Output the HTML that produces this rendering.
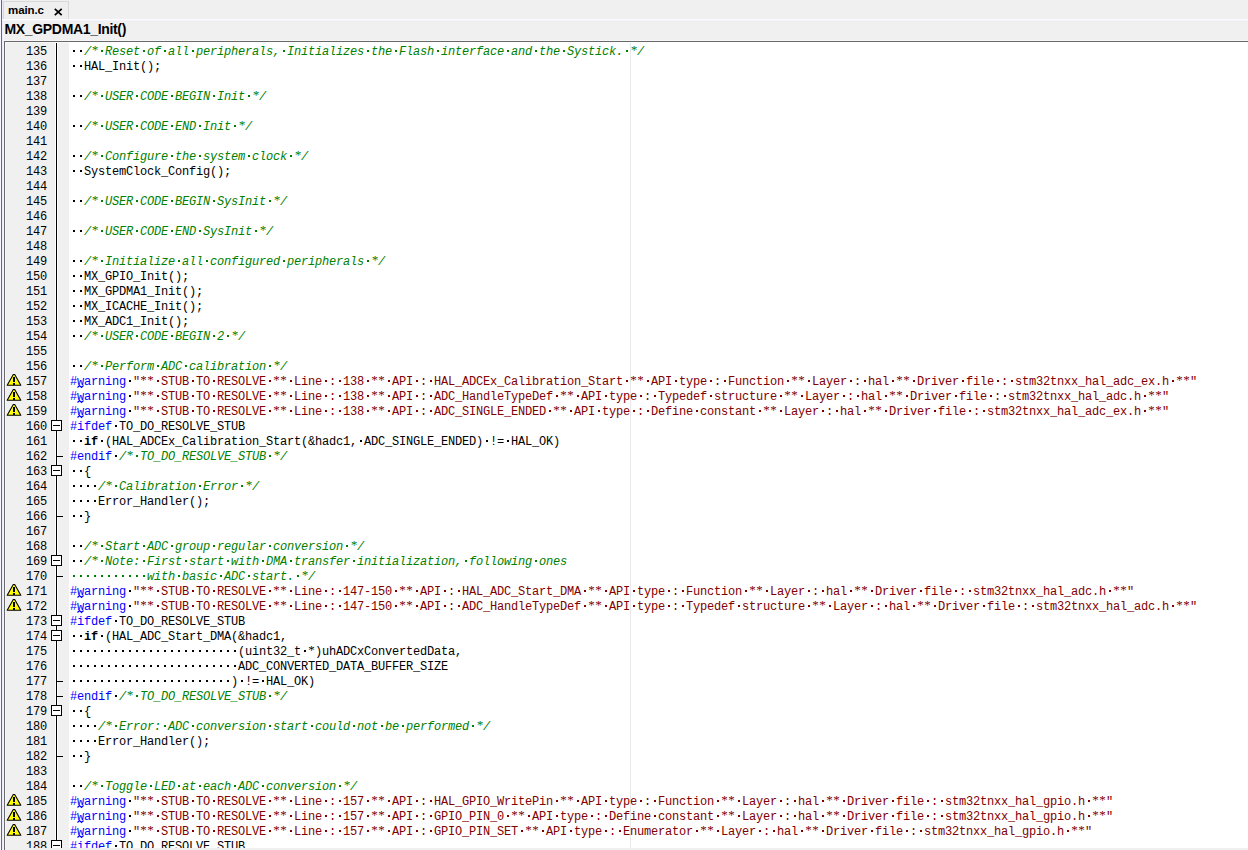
<!DOCTYPE html>
<html><head><meta charset="utf-8"><style>
*{margin:0;padding:0}
html,body{width:1248px;height:850px;overflow:hidden;background:#f0f0f0;position:relative}
.ab{position:absolute}
#lb1{position:absolute;left:0;top:0;width:1px;height:850px;background:#f7f7fe}
#lb2{position:absolute;left:1px;top:0;width:1px;height:850px;background:#6a6a6a}
#lb3{position:absolute;left:2px;top:0;width:1px;height:850px;background:#eaeafa}
#lb4{position:absolute;left:3px;top:0;width:1px;height:850px;background:#f4f4fe}
#tab{position:absolute;left:3px;top:1px;width:64px;height:18px;border:1px solid #d9d9d9;border-bottom:none;background:#efefef}
#tabt{position:absolute;left:4px;top:0px;letter-spacing:-0.1px;font:bold 11.5px "Liberation Sans",sans-serif;color:#000;line-height:17px}
#tabx{position:absolute;left:50px;top:5.5px}
.sq{position:absolute;left:76px}
#hl1{position:absolute;left:2px;top:19px;width:1246px;height:1px;background:#fcfcfc}
#hl2{position:absolute;left:2px;top:20px;width:1246px;height:1px;background:#f3f3fc}
#bc{position:absolute;left:4.5px;top:21px;font:bold 14px "Liberation Sans",sans-serif;letter-spacing:-0.33px;color:#000;line-height:17px;white-space:pre}
#hl3{position:absolute;left:4px;top:40px;width:1244px;height:1px;background:#f7f7f7}
#ed{position:absolute;left:4px;top:41px;width:1244px;height:809px;background:#fff;border-top:1px solid #696969;border-left:1px solid #696969;box-sizing:border-box}
#gut{position:absolute;left:5px;top:42px;width:64px;height:806px;background:#f0f0f0;border-top:1px solid #f8f8f8;border-left:1px solid #f8f8f8;box-sizing:border-box}
#gw1{position:absolute;left:55px;top:43px;width:3px;height:805px;background:#fff}
#gl{position:absolute;left:56px;top:43px;width:1px;height:805px;background:#000}
#pm{position:absolute;left:630px;top:43px;width:1px;height:805px;background:#e8e8e8}
.n{position:absolute;left:6px;width:41px;text-align:right;font:12px "Liberation Mono",monospace;letter-spacing:-0.203125px;line-height:15px;height:15px;color:#000;white-space:pre}
.w{position:absolute;left:6px}
.bx{position:absolute;left:51px;width:9px;height:9px;border:1px solid #000;background:#fff}
.bx:after{content:"";position:absolute;left:1px;top:4px;width:7px;height:1px;background:#000}
.tk{position:absolute;left:57px;width:6px;height:1px;background:#000}
.l{position:absolute;left:70px;height:15px;font:12px "Liberation Mono",monospace;letter-spacing:-0.203125px;line-height:15px;color:#000;white-space:pre}
.c{color:#008000;font-style:italic}
.p{color:#0000ff}
.s{color:#800000}
b{font-weight:bold}
k{font-size:13px;font-family:"Liberation Serif",serif;letter-spacing:0;display:inline-block;width:7px;height:15px;vertical-align:top;line-height:15px;text-align:center;position:relative;top:-3px}
i.d{font-style:normal;display:inline-block;height:15px;vertical-align:top;background-image:linear-gradient(to right,transparent 3px,currentColor 3px,currentColor 5px,transparent 5px);background-size:7px 2px;background-repeat:repeat-x;background-position:0 5px}
#bot{position:absolute;left:5px;top:848px;width:1243px;height:2px;background:#f0f0f0}
</style></head><body>
<div id="lb1"></div><div id="lb2"></div><div id="lb3"></div><div id="lb4"></div>
<div id="tab"><div id="tabt">main.c</div><svg id="tabx" width="9" height="8" viewBox="0 0 9 8"><path d="M0.8 0.8 L7.7 7.2 M7.7 0.8 L0.8 7.2" stroke="#000" stroke-width="1.7"/></svg></div>
<div id="hl1"></div><div id="hl2"></div>
<div id="bc">MX_GPDMA1_Init()</div>
<div id="hl3"></div>
<div id="ed"></div>
<div id="gut"></div><div id="gw1"></div><div id="gl"></div><div id="pm"></div>
<div class="n" style="top:45px">135</div>
<div class="n" style="top:60px">136</div>
<div class="n" style="top:75px">137</div>
<div class="n" style="top:90px">138</div>
<div class="n" style="top:105px">139</div>
<div class="n" style="top:120px">140</div>
<div class="n" style="top:135px">141</div>
<div class="n" style="top:150px">142</div>
<div class="n" style="top:165px">143</div>
<div class="n" style="top:180px">144</div>
<div class="n" style="top:195px">145</div>
<div class="n" style="top:210px">146</div>
<div class="n" style="top:225px">147</div>
<div class="n" style="top:240px">148</div>
<div class="n" style="top:255px">149</div>
<div class="n" style="top:270px">150</div>
<div class="n" style="top:285px">151</div>
<div class="n" style="top:300px">152</div>
<div class="n" style="top:315px">153</div>
<div class="n" style="top:330px">154</div>
<div class="n" style="top:345px">155</div>
<div class="n" style="top:360px">156</div>
<div class="n" style="top:375px">157</div>
<svg class="w" style="top:373px" width="16" height="13" viewBox="0 0 16 13"><path d="M7.3 1.5 L8.7 1.5 L14.8 12.3 L1.2 12.3 Z" fill="#ffff00" stroke="#000" stroke-width="1.1" stroke-linejoin="round"/><rect x="7" y="4" width="2" height="5" fill="#000"/><rect x="7" y="10" width="2" height="2" fill="#000"/></svg>
<div class="n" style="top:390px">158</div>
<svg class="w" style="top:388px" width="16" height="13" viewBox="0 0 16 13"><path d="M7.3 1.5 L8.7 1.5 L14.8 12.3 L1.2 12.3 Z" fill="#ffff00" stroke="#000" stroke-width="1.1" stroke-linejoin="round"/><rect x="7" y="4" width="2" height="5" fill="#000"/><rect x="7" y="10" width="2" height="2" fill="#000"/></svg>
<div class="n" style="top:405px">159</div>
<svg class="w" style="top:403px" width="16" height="13" viewBox="0 0 16 13"><path d="M7.3 1.5 L8.7 1.5 L14.8 12.3 L1.2 12.3 Z" fill="#ffff00" stroke="#000" stroke-width="1.1" stroke-linejoin="round"/><rect x="7" y="4" width="2" height="5" fill="#000"/><rect x="7" y="10" width="2" height="2" fill="#000"/></svg>
<div class="n" style="top:420px">160</div>
<div class="bx" style="top:420px"></div>
<div class="n" style="top:435px">161</div>
<div class="n" style="top:450px">162</div>
<div class="tk" style="top:456px"></div>
<div class="n" style="top:465px">163</div>
<div class="bx" style="top:465px"></div>
<div class="n" style="top:480px">164</div>
<div class="n" style="top:495px">165</div>
<div class="n" style="top:510px">166</div>
<div class="tk" style="top:516px"></div>
<div class="n" style="top:525px">167</div>
<div class="n" style="top:540px">168</div>
<div class="n" style="top:555px">169</div>
<div class="bx" style="top:555px"></div>
<div class="n" style="top:570px">170</div>
<div class="tk" style="top:576px"></div>
<div class="n" style="top:585px">171</div>
<svg class="w" style="top:583px" width="16" height="13" viewBox="0 0 16 13"><path d="M7.3 1.5 L8.7 1.5 L14.8 12.3 L1.2 12.3 Z" fill="#ffff00" stroke="#000" stroke-width="1.1" stroke-linejoin="round"/><rect x="7" y="4" width="2" height="5" fill="#000"/><rect x="7" y="10" width="2" height="2" fill="#000"/></svg>
<div class="n" style="top:600px">172</div>
<svg class="w" style="top:598px" width="16" height="13" viewBox="0 0 16 13"><path d="M7.3 1.5 L8.7 1.5 L14.8 12.3 L1.2 12.3 Z" fill="#ffff00" stroke="#000" stroke-width="1.1" stroke-linejoin="round"/><rect x="7" y="4" width="2" height="5" fill="#000"/><rect x="7" y="10" width="2" height="2" fill="#000"/></svg>
<div class="n" style="top:615px">173</div>
<div class="bx" style="top:615px"></div>
<div class="n" style="top:630px">174</div>
<div class="bx" style="top:630px"></div>
<div class="n" style="top:645px">175</div>
<div class="n" style="top:660px">176</div>
<div class="n" style="top:675px">177</div>
<div class="tk" style="top:681px"></div>
<div class="n" style="top:690px">178</div>
<div class="tk" style="top:696px"></div>
<div class="n" style="top:705px">179</div>
<div class="bx" style="top:705px"></div>
<div class="n" style="top:720px">180</div>
<div class="n" style="top:735px">181</div>
<div class="n" style="top:750px">182</div>
<div class="tk" style="top:756px"></div>
<div class="n" style="top:765px">183</div>
<div class="n" style="top:780px">184</div>
<div class="n" style="top:795px">185</div>
<svg class="w" style="top:793px" width="16" height="13" viewBox="0 0 16 13"><path d="M7.3 1.5 L8.7 1.5 L14.8 12.3 L1.2 12.3 Z" fill="#ffff00" stroke="#000" stroke-width="1.1" stroke-linejoin="round"/><rect x="7" y="4" width="2" height="5" fill="#000"/><rect x="7" y="10" width="2" height="2" fill="#000"/></svg>
<div class="n" style="top:810px">186</div>
<svg class="w" style="top:808px" width="16" height="13" viewBox="0 0 16 13"><path d="M7.3 1.5 L8.7 1.5 L14.8 12.3 L1.2 12.3 Z" fill="#ffff00" stroke="#000" stroke-width="1.1" stroke-linejoin="round"/><rect x="7" y="4" width="2" height="5" fill="#000"/><rect x="7" y="10" width="2" height="2" fill="#000"/></svg>
<div class="n" style="top:825px">187</div>
<svg class="w" style="top:823px" width="16" height="13" viewBox="0 0 16 13"><path d="M7.3 1.5 L8.7 1.5 L14.8 12.3 L1.2 12.3 Z" fill="#ffff00" stroke="#000" stroke-width="1.1" stroke-linejoin="round"/><rect x="7" y="4" width="2" height="5" fill="#000"/><rect x="7" y="10" width="2" height="2" fill="#000"/></svg>
<div class="n" style="top:840px">188</div>
<div class="bx" style="top:840px"></div>
<div class="l" style="top:45px"><i class="d">  </i><span class="c">/<k>*</k><i class="d"> </i>Reset<i class="d"> </i>of<i class="d"> </i>all<i class="d"> </i>peripherals,<i class="d"> </i>Initializes<i class="d"> </i>the<i class="d"> </i>Flash<i class="d"> </i>interface<i class="d"> </i>and<i class="d"> </i>the<i class="d"> </i>Systick.<i class="d"> </i><k>*</k>/</span></div>
<div class="l" style="top:60px"><i class="d">  </i>HAL_Init();</div>
<div class="l" style="top:75px"></div>
<div class="l" style="top:90px"><i class="d">  </i><span class="c">/<k>*</k><i class="d"> </i>USER<i class="d"> </i>CODE<i class="d"> </i>BEGIN<i class="d"> </i>Init<i class="d"> </i><k>*</k>/</span></div>
<div class="l" style="top:105px"></div>
<div class="l" style="top:120px"><i class="d">  </i><span class="c">/<k>*</k><i class="d"> </i>USER<i class="d"> </i>CODE<i class="d"> </i>END<i class="d"> </i>Init<i class="d"> </i><k>*</k>/</span></div>
<div class="l" style="top:135px"></div>
<div class="l" style="top:150px"><i class="d">  </i><span class="c">/<k>*</k><i class="d"> </i>Configure<i class="d"> </i>the<i class="d"> </i>system<i class="d"> </i>clock<i class="d"> </i><k>*</k>/</span></div>
<div class="l" style="top:165px"><i class="d">  </i>SystemClock_Config();</div>
<div class="l" style="top:180px"></div>
<div class="l" style="top:195px"><i class="d">  </i><span class="c">/<k>*</k><i class="d"> </i>USER<i class="d"> </i>CODE<i class="d"> </i>BEGIN<i class="d"> </i>SysInit<i class="d"> </i><k>*</k>/</span></div>
<div class="l" style="top:210px"></div>
<div class="l" style="top:225px"><i class="d">  </i><span class="c">/<k>*</k><i class="d"> </i>USER<i class="d"> </i>CODE<i class="d"> </i>END<i class="d"> </i>SysInit<i class="d"> </i><k>*</k>/</span></div>
<div class="l" style="top:240px"></div>
<div class="l" style="top:255px"><i class="d">  </i><span class="c">/<k>*</k><i class="d"> </i>Initialize<i class="d"> </i>all<i class="d"> </i>configured<i class="d"> </i>peripherals<i class="d"> </i><k>*</k>/</span></div>
<div class="l" style="top:270px"><i class="d">  </i>MX_GPIO_Init();</div>
<div class="l" style="top:285px"><i class="d">  </i>MX_GPDMA1_Init();</div>
<div class="l" style="top:300px"><i class="d">  </i>MX_ICACHE_Init();</div>
<div class="l" style="top:315px"><i class="d">  </i>MX_ADC1_Init();</div>
<div class="l" style="top:330px"><i class="d">  </i><span class="c">/<k>*</k><i class="d"> </i>USER<i class="d"> </i>CODE<i class="d"> </i>BEGIN<i class="d"> </i>2<i class="d"> </i><k>*</k>/</span></div>
<div class="l" style="top:345px"></div>
<div class="l" style="top:360px"><i class="d">  </i><span class="c">/<k>*</k><i class="d"> </i>Perform<i class="d"> </i>ADC<i class="d"> </i>calibration<i class="d"> </i><k>*</k>/</span></div>
<div class="l" style="top:375px"><span class="p">#warning</span><i class="d"> </i><span class="s">"<k>*</k><k>*</k><i class="d"> </i>STUB<i class="d"> </i>TO<i class="d"> </i>RESOLVE<i class="d"> </i><k>*</k><k>*</k><i class="d"> </i>Line<i class="d"> </i>:<i class="d"> </i>138<i class="d"> </i><k>*</k><k>*</k><i class="d"> </i>API<i class="d"> </i>:<i class="d"> </i>HAL_ADCEx_Calibration_Start<i class="d"> </i><k>*</k><k>*</k><i class="d"> </i>API<i class="d"> </i>type<i class="d"> </i>:<i class="d"> </i>Function<i class="d"> </i><k>*</k><k>*</k><i class="d"> </i>Layer<i class="d"> </i>:<i class="d"> </i>hal<i class="d"> </i><k>*</k><k>*</k><i class="d"> </i>Driver<i class="d"> </i>file<i class="d"> </i>:<i class="d"> </i>stm32tnxx_hal_adc_ex.h<i class="d"> </i><k>*</k><k>*</k>"</span></div>
<div class="l" style="top:390px"><span class="p">#warning</span><i class="d"> </i><span class="s">"<k>*</k><k>*</k><i class="d"> </i>STUB<i class="d"> </i>TO<i class="d"> </i>RESOLVE<i class="d"> </i><k>*</k><k>*</k><i class="d"> </i>Line<i class="d"> </i>:<i class="d"> </i>138<i class="d"> </i><k>*</k><k>*</k><i class="d"> </i>API<i class="d"> </i>:<i class="d"> </i>ADC_HandleTypeDef<i class="d"> </i><k>*</k><k>*</k><i class="d"> </i>API<i class="d"> </i>type<i class="d"> </i>:<i class="d"> </i>Typedef<i class="d"> </i>structure<i class="d"> </i><k>*</k><k>*</k><i class="d"> </i>Layer<i class="d"> </i>:<i class="d"> </i>hal<i class="d"> </i><k>*</k><k>*</k><i class="d"> </i>Driver<i class="d"> </i>file<i class="d"> </i>:<i class="d"> </i>stm32tnxx_hal_adc.h<i class="d"> </i><k>*</k><k>*</k>"</span></div>
<div class="l" style="top:405px"><span class="p">#warning</span><i class="d"> </i><span class="s">"<k>*</k><k>*</k><i class="d"> </i>STUB<i class="d"> </i>TO<i class="d"> </i>RESOLVE<i class="d"> </i><k>*</k><k>*</k><i class="d"> </i>Line<i class="d"> </i>:<i class="d"> </i>138<i class="d"> </i><k>*</k><k>*</k><i class="d"> </i>API<i class="d"> </i>:<i class="d"> </i>ADC_SINGLE_ENDED<i class="d"> </i><k>*</k><k>*</k><i class="d"> </i>API<i class="d"> </i>type<i class="d"> </i>:<i class="d"> </i>Define<i class="d"> </i>constant<i class="d"> </i><k>*</k><k>*</k><i class="d"> </i>Layer<i class="d"> </i>:<i class="d"> </i>hal<i class="d"> </i><k>*</k><k>*</k><i class="d"> </i>Driver<i class="d"> </i>file<i class="d"> </i>:<i class="d"> </i>stm32tnxx_hal_adc_ex.h<i class="d"> </i><k>*</k><k>*</k>"</span></div>
<div class="l" style="top:420px"><span class="p">#ifdef</span><i class="d"> </i>TO_DO_RESOLVE_STUB</div>
<div class="l" style="top:435px"><i class="d">  </i><b>if</b><i class="d"> </i>(HAL_ADCEx_Calibration_Start(&amp;hadc1,<i class="d"> </i>ADC_SINGLE_ENDED)<i class="d"> </i>!=<i class="d"> </i>HAL_OK)</div>
<div class="l" style="top:450px"><span class="p">#endif</span><i class="d"> </i><span class="c">/<k>*</k><i class="d"> </i>TO_DO_RESOLVE_STUB<i class="d"> </i><k>*</k>/</span></div>
<div class="l" style="top:465px"><i class="d">  </i>{</div>
<div class="l" style="top:480px"><i class="d">    </i><span class="c">/<k>*</k><i class="d"> </i>Calibration<i class="d"> </i>Error<i class="d"> </i><k>*</k>/</span></div>
<div class="l" style="top:495px"><i class="d">    </i>Error_Handler();</div>
<div class="l" style="top:510px"><i class="d">  </i>}</div>
<div class="l" style="top:525px"></div>
<div class="l" style="top:540px"><i class="d">  </i><span class="c">/<k>*</k><i class="d"> </i>Start<i class="d"> </i>ADC<i class="d"> </i>group<i class="d"> </i>regular<i class="d"> </i>conversion<i class="d"> </i><k>*</k>/</span></div>
<div class="l" style="top:555px"><i class="d">  </i><span class="c">/<k>*</k><i class="d"> </i>Note:<i class="d"> </i>First<i class="d"> </i>start<i class="d"> </i>with<i class="d"> </i>DMA<i class="d"> </i>transfer<i class="d"> </i>initialization,<i class="d"> </i>following<i class="d"> </i>ones</span></div>
<div class="l" style="top:570px"><span class="c"><i class="d">           </i>with<i class="d"> </i>basic<i class="d"> </i>ADC<i class="d"> </i>start.<i class="d"> </i><k>*</k>/</span></div>
<div class="l" style="top:585px"><span class="p">#warning</span><i class="d"> </i><span class="s">"<k>*</k><k>*</k><i class="d"> </i>STUB<i class="d"> </i>TO<i class="d"> </i>RESOLVE<i class="d"> </i><k>*</k><k>*</k><i class="d"> </i>Line<i class="d"> </i>:<i class="d"> </i>147-150<i class="d"> </i><k>*</k><k>*</k><i class="d"> </i>API<i class="d"> </i>:<i class="d"> </i>HAL_ADC_Start_DMA<i class="d"> </i><k>*</k><k>*</k><i class="d"> </i>API<i class="d"> </i>type<i class="d"> </i>:<i class="d"> </i>Function<i class="d"> </i><k>*</k><k>*</k><i class="d"> </i>Layer<i class="d"> </i>:<i class="d"> </i>hal<i class="d"> </i><k>*</k><k>*</k><i class="d"> </i>Driver<i class="d"> </i>file<i class="d"> </i>:<i class="d"> </i>stm32tnxx_hal_adc.h<i class="d"> </i><k>*</k><k>*</k>"</span></div>
<div class="l" style="top:600px"><span class="p">#warning</span><i class="d"> </i><span class="s">"<k>*</k><k>*</k><i class="d"> </i>STUB<i class="d"> </i>TO<i class="d"> </i>RESOLVE<i class="d"> </i><k>*</k><k>*</k><i class="d"> </i>Line<i class="d"> </i>:<i class="d"> </i>147-150<i class="d"> </i><k>*</k><k>*</k><i class="d"> </i>API<i class="d"> </i>:<i class="d"> </i>ADC_HandleTypeDef<i class="d"> </i><k>*</k><k>*</k><i class="d"> </i>API<i class="d"> </i>type<i class="d"> </i>:<i class="d"> </i>Typedef<i class="d"> </i>structure<i class="d"> </i><k>*</k><k>*</k><i class="d"> </i>Layer<i class="d"> </i>:<i class="d"> </i>hal<i class="d"> </i><k>*</k><k>*</k><i class="d"> </i>Driver<i class="d"> </i>file<i class="d"> </i>:<i class="d"> </i>stm32tnxx_hal_adc.h<i class="d"> </i><k>*</k><k>*</k>"</span></div>
<div class="l" style="top:615px"><span class="p">#ifdef</span><i class="d"> </i>TO_DO_RESOLVE_STUB</div>
<div class="l" style="top:630px"><i class="d">  </i><b>if</b><i class="d"> </i>(HAL_ADC_Start_DMA(&amp;hadc1,</div>
<div class="l" style="top:645px"><i class="d">                        </i>(uint32_t<i class="d"> </i><k>*</k>)uhADCxConvertedData,</div>
<div class="l" style="top:660px"><i class="d">                        </i>ADC_CONVERTED_DATA_BUFFER_SIZE</div>
<div class="l" style="top:675px"><i class="d">                       </i>)<i class="d"> </i>!=<i class="d"> </i>HAL_OK)</div>
<div class="l" style="top:690px"><span class="p">#endif</span><i class="d"> </i><span class="c">/<k>*</k><i class="d"> </i>TO_DO_RESOLVE_STUB<i class="d"> </i><k>*</k>/</span></div>
<div class="l" style="top:705px"><i class="d">  </i>{</div>
<div class="l" style="top:720px"><i class="d">    </i><span class="c">/<k>*</k><i class="d"> </i>Error:<i class="d"> </i>ADC<i class="d"> </i>conversion<i class="d"> </i>start<i class="d"> </i>could<i class="d"> </i>not<i class="d"> </i>be<i class="d"> </i>performed<i class="d"> </i><k>*</k>/</span></div>
<div class="l" style="top:735px"><i class="d">    </i>Error_Handler();</div>
<div class="l" style="top:750px"><i class="d">  </i>}</div>
<div class="l" style="top:765px"></div>
<div class="l" style="top:780px"><i class="d">  </i><span class="c">/<k>*</k><i class="d"> </i>Toggle<i class="d"> </i>LED<i class="d"> </i>at<i class="d"> </i>each<i class="d"> </i>ADC<i class="d"> </i>conversion<i class="d"> </i><k>*</k>/</span></div>
<div class="l" style="top:795px"><span class="p">#warning</span><i class="d"> </i><span class="s">"<k>*</k><k>*</k><i class="d"> </i>STUB<i class="d"> </i>TO<i class="d"> </i>RESOLVE<i class="d"> </i><k>*</k><k>*</k><i class="d"> </i>Line<i class="d"> </i>:<i class="d"> </i>157<i class="d"> </i><k>*</k><k>*</k><i class="d"> </i>API<i class="d"> </i>:<i class="d"> </i>HAL_GPIO_WritePin<i class="d"> </i><k>*</k><k>*</k><i class="d"> </i>API<i class="d"> </i>type<i class="d"> </i>:<i class="d"> </i>Function<i class="d"> </i><k>*</k><k>*</k><i class="d"> </i>Layer<i class="d"> </i>:<i class="d"> </i>hal<i class="d"> </i><k>*</k><k>*</k><i class="d"> </i>Driver<i class="d"> </i>file<i class="d"> </i>:<i class="d"> </i>stm32tnxx_hal_gpio.h<i class="d"> </i><k>*</k><k>*</k>"</span></div>
<div class="l" style="top:810px"><span class="p">#warning</span><i class="d"> </i><span class="s">"<k>*</k><k>*</k><i class="d"> </i>STUB<i class="d"> </i>TO<i class="d"> </i>RESOLVE<i class="d"> </i><k>*</k><k>*</k><i class="d"> </i>Line<i class="d"> </i>:<i class="d"> </i>157<i class="d"> </i><k>*</k><k>*</k><i class="d"> </i>API<i class="d"> </i>:<i class="d"> </i>GPIO_PIN_0<i class="d"> </i><k>*</k><k>*</k><i class="d"> </i>API<i class="d"> </i>type<i class="d"> </i>:<i class="d"> </i>Define<i class="d"> </i>constant<i class="d"> </i><k>*</k><k>*</k><i class="d"> </i>Layer<i class="d"> </i>:<i class="d"> </i>hal<i class="d"> </i><k>*</k><k>*</k><i class="d"> </i>Driver<i class="d"> </i>file<i class="d"> </i>:<i class="d"> </i>stm32tnxx_hal_gpio.h<i class="d"> </i><k>*</k><k>*</k>"</span></div>
<div class="l" style="top:825px"><span class="p">#warning</span><i class="d"> </i><span class="s">"<k>*</k><k>*</k><i class="d"> </i>STUB<i class="d"> </i>TO<i class="d"> </i>RESOLVE<i class="d"> </i><k>*</k><k>*</k><i class="d"> </i>Line<i class="d"> </i>:<i class="d"> </i>157<i class="d"> </i><k>*</k><k>*</k><i class="d"> </i>API<i class="d"> </i>:<i class="d"> </i>GPIO_PIN_SET<i class="d"> </i><k>*</k><k>*</k><i class="d"> </i>API<i class="d"> </i>type<i class="d"> </i>:<i class="d"> </i>Enumerator<i class="d"> </i><k>*</k><k>*</k><i class="d"> </i>Layer<i class="d"> </i>:<i class="d"> </i>hal<i class="d"> </i><k>*</k><k>*</k><i class="d"> </i>Driver<i class="d"> </i>file<i class="d"> </i>:<i class="d"> </i>stm32tnxx_hal_gpio.h<i class="d"> </i><k>*</k><k>*</k>"</span></div>
<div class="l" style="top:840px"><span class="p">#ifdef</span><i class="d"> </i>TO_DO_RESOLVE_STUB</div>
<svg class="sq" style="top:384px" width="9" height="5" viewBox="0 0 9 5"><polyline points="1.5,3.5 3.5,1.5 5.5,3.5 7.5,1.5" fill="none" stroke="#0000ff" stroke-width="1.2"/></svg>
<svg class="sq" style="top:399px" width="9" height="5" viewBox="0 0 9 5"><polyline points="1.5,3.5 3.5,1.5 5.5,3.5 7.5,1.5" fill="none" stroke="#0000ff" stroke-width="1.2"/></svg>
<svg class="sq" style="top:414px" width="9" height="5" viewBox="0 0 9 5"><polyline points="1.5,3.5 3.5,1.5 5.5,3.5 7.5,1.5" fill="none" stroke="#0000ff" stroke-width="1.2"/></svg>
<svg class="sq" style="top:594px" width="9" height="5" viewBox="0 0 9 5"><polyline points="1.5,3.5 3.5,1.5 5.5,3.5 7.5,1.5" fill="none" stroke="#0000ff" stroke-width="1.2"/></svg>
<svg class="sq" style="top:609px" width="9" height="5" viewBox="0 0 9 5"><polyline points="1.5,3.5 3.5,1.5 5.5,3.5 7.5,1.5" fill="none" stroke="#0000ff" stroke-width="1.2"/></svg>
<svg class="sq" style="top:804px" width="9" height="5" viewBox="0 0 9 5"><polyline points="1.5,3.5 3.5,1.5 5.5,3.5 7.5,1.5" fill="none" stroke="#0000ff" stroke-width="1.2"/></svg>
<svg class="sq" style="top:819px" width="9" height="5" viewBox="0 0 9 5"><polyline points="1.5,3.5 3.5,1.5 5.5,3.5 7.5,1.5" fill="none" stroke="#0000ff" stroke-width="1.2"/></svg>
<svg class="sq" style="top:834px" width="9" height="5" viewBox="0 0 9 5"><polyline points="1.5,3.5 3.5,1.5 5.5,3.5 7.5,1.5" fill="none" stroke="#0000ff" stroke-width="1.2"/></svg>
<div id="bot"></div>
</body></html>
